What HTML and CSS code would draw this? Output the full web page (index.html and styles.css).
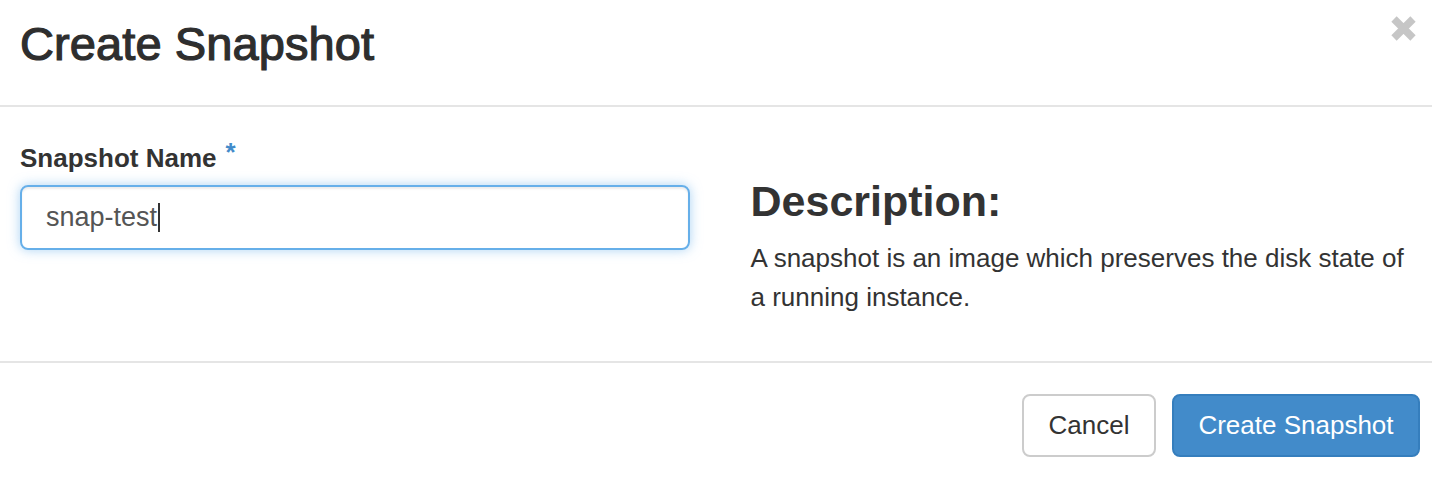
FILE: index.html
```html
<!DOCTYPE html>
<html lang="en">
<head>
<meta charset="utf-8">
<title>Create Snapshot</title>
<link rel="stylesheet" href="styles.css">
</head>
<body>
<div class="modal">
  <div class="modal-header">
    <h4 class="modal-title">Create Snapshot</h4>
    <button class="close" type="button" aria-label="Close">
      <svg viewBox="0 0 25 25" width="25" height="25" aria-hidden="true">
        <path d="M3 3 L22 22 M22 3 L3 22" stroke="#c6c6c6" stroke-width="7.5" stroke-linecap="butt" fill="none"/>
      </svg>
    </button>
  </div>
  <div class="modal-body">
    <div class="col-form">
      <label class="field-label">Snapshot Name<span class="required">*</span></label>
      <div class="text-input"><span class="input-value">snap-test</span><span class="caret"></span></div>
    </div>
    <div class="col-help">
      <h3 class="help-title">Description:</h3>
      <p class="help-text">A snapshot is an image which preserves the disk state of a running instance.</p>
    </div>
  </div>
  <div class="modal-footer">
    <button class="btn btn-default" type="button">Cancel</button>
    <button class="btn btn-primary" type="button">Create Snapshot</button>
  </div>
</div>
</body>
</html>
```
FILE: styles.css
```css
* { box-sizing: border-box; }
html, body {
  margin: 0;
  padding: 0;
  background: #fff;
}
body {
  font-family: "Liberation Sans", Arial, "Helvetica Neue", sans-serif;
  color: #333;
}
.modal {
  width: 1432px;
  height: 478px;
  background: #fff;
  display: flex;
  flex-direction: column;
}
.modal-header {
  height: 107px;
  padding: 16px 16px 0 20px;
  border-bottom: 2px solid #e5e5e5;
  display: flex;
  justify-content: space-between;
  align-items: flex-start;
}
.modal-title {
  margin: 2px 0 0 0;
  font-size: 47px;
  line-height: 1.1;
  font-weight: 500;
  color: #2e2e2e;
  -webkit-text-stroke: 1.2px #2e2e2e;
  letter-spacing: 0.1px;
}
.close {
  border: 0;
  background: transparent;
  padding: 0;
  margin: 0;
  width: 25px;
  height: 25px;
  display: block;
}
.close svg { display: block; }

.modal-body {
  padding: 27px 12px 0 20px;
  display: grid;
  grid-template-columns: 1fr 1fr;
  column-gap: 61px;
  height: 256px;
  border-bottom: 2px solid #e5e5e5;
}
.field-label {
  display: block;
  font-size: 26px;
  line-height: 37px;
  font-weight: bold;
  color: #333;
  margin-bottom: 8px;
}
.required {
  color: #428bca;
  margin-left: 9px;
  vertical-align: 6px;
  font-size: 26px;
}
.text-input {
  height: 65px;
  border: 2px solid #66afe9;
  border-radius: 8px;
  padding: 0 24px;
  display: flex;
  align-items: center;
  font-size: 27px;
  color: #555;
  box-shadow: inset 0 2px 2px rgba(0,0,0,.075), 0 0 12px rgba(102,175,233,.55);
}
.caret {
  display: inline-block;
  width: 2px;
  height: 29px;
  background: #333;
  margin-left: 1px;
}
.help-title {
  margin: 44px 0 0;
  font-size: 43px;
  line-height: 1.1;
  font-weight: bold;
  color: #333;
}
.help-text {
  margin: 14px 0 0;
  font-size: 26px;
  line-height: 39px;
  color: #333;
}
.modal-footer {
  flex: 1;
  padding: 31px 12px 0 20px;
  display: flex;
  justify-content: flex-end;
  align-items: flex-start;
  gap: 16px;
}
.btn {
  height: 63px;
  padding: 0 24px;
  font-family: inherit;
  font-size: 26px;
  border-radius: 8px;
  border: 2px solid transparent;
  display: inline-flex;
  align-items: center;
  justify-content: center;
}
.btn-default {
  width: 134px;
  background: #fff;
  border-color: #ccc;
  color: #333;
}
.btn-primary {
  width: 248px;
  background: #428bca;
  border-color: #357ebd;
  color: #fff;
}
```
